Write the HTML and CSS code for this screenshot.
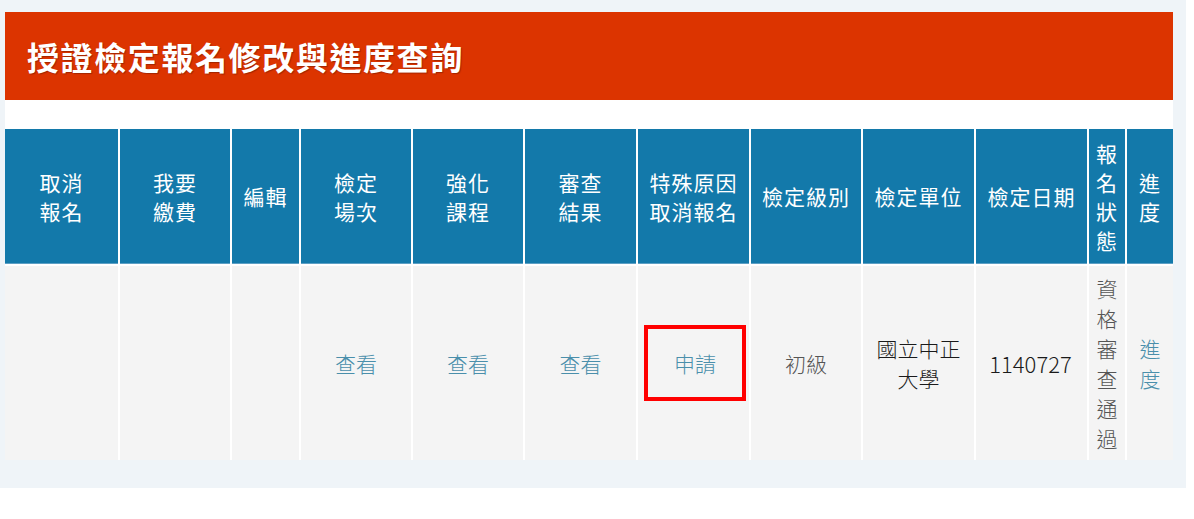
FILE: index.html
```html
<!DOCTYPE html>
<html lang="zh-Hant">
<head>
<meta charset="utf-8">
<title>授證檢定報名修改與進度查詢</title>
<link rel="stylesheet" href="styles.css">
</head>
<body>
<div class="page">
  <div class="panel">
    <div class="title-bar"><h1 class="title">授證檢定報名修改與進度查詢</h1></div>
    <div class="spacer"></div>
    <table class="grid">
      <colgroup>
        <col class="c1"><col class="c2"><col class="c3"><col class="c4"><col class="c5"><col class="c6">
        <col class="c7"><col class="c8"><col class="c9"><col class="c10"><col class="c11"><col class="c12">
      </colgroup>
      <thead>
        <tr>
          <th>取消<br>報名</th>
          <th>我要<br>繳費</th>
          <th>編輯</th>
          <th>檢定<br>場次</th>
          <th>強化<br>課程</th>
          <th>審查<br>結果</th>
          <th>特殊原因<br>取消報名</th>
          <th>檢定級別</th>
          <th>檢定單位</th>
          <th>檢定日期</th>
          <th class="narrow">報名狀態</th>
          <th class="narrow">進度</th>
        </tr>
      </thead>
      <tbody>
        <tr>
          <td></td>
          <td></td>
          <td></td>
          <td><a class="link" href="#">查看</a></td>
          <td><a class="link" href="#">查看</a></td>
          <td><a class="link" href="#">查看</a></td>
          <td><span class="mark"><a class="link" href="#">申請</a></span></td>
          <td class="muted">初級</td>
          <td class="dark unit">國立中正大學</td>
          <td class="dark"><span class="date">1140727</span></td>
          <td class="muted narrow">資格審查通過</td>
          <td class="narrow"><a class="link" href="#">進度</a></td>
        </tr>
      </tbody>
    </table>
  </div>
</div>
</body>
</html>
```

FILE: styles.css
```css
html, body {
  margin: 0;
  padding: 0;
  background: #ffffff;
}

body {
  font-family: "Noto Sans CJK TC", "Noto Sans", "Liberation Sans", sans-serif;
}

.page {
  width: 1186px;
  box-sizing: border-box;
  padding: 12px 13px 28px 5px;
  background: #eff4f8;
}

.panel {
  width: 1168px;
  background: #ffffff;
}

.title-bar {
  height: 88px;
  background: #dc3400;
  display: flex;
  align-items: center;
  padding-left: 22px;
}

.title {
  margin: 0;
  color: #ffffff;
  font-size: 32px;
  font-weight: 700;
  letter-spacing: 1.6px;
  line-height: 1;
  text-shadow: 1px 1px 1px rgba(90, 20, 0, 0.45);
}

.spacer {
  height: 29px;
}

.grid {
  width: 1168px;
  table-layout: fixed;
  border-collapse: separate;
  border-spacing: 0;
}

.c1 { width: 115px; }
.c2 { width: 112px; }
.c3 { width: 69px; }
.c4 { width: 112px; }
.c5 { width: 112px; }
.c6 { width: 113px; }
.c7 { width: 113px; }
.c8 { width: 112px; }
.c9 { width: 113px; }
.c10 { width: 113px; }
.c11 { width: 38px; }
.c12 { width: 46px; }

.grid th,
.grid td {
  box-sizing: border-box;
  padding: 0 6px;
  text-align: center;
  vertical-align: middle;
  border-right: 2px solid #ffffff;
}

.grid th:last-child,
.grid td:last-child {
  border-right: 0;
}

.grid th {
  height: 137px;
  background: #1379aa;
  color: #ffffff;
  font-size: 21px;
  font-weight: 400;
  line-height: 29px;
  letter-spacing: 1px;
  border-bottom: 2px solid #ffffff;
  box-shadow: inset 0 -1px 0 #5d9fc4;
}

.grid td {
  height: 194px;
  background: #f4f4f4;
  font-size: 21px;
  font-weight: 300;
  line-height: 30px;
  color: #555555;
}

.grid th.narrow,
.grid td.narrow {
  padding: 0 4px;
  word-break: break-all;
}

.link {
  color: #4a8fab;
  text-decoration: none;
}

.muted {
  color: #555555;
}

.grid td.dark {
  color: #1a1a1a;
}

.unit {
  line-height: 25px;
  padding: 0 10px;
}

.date {
  display: inline-block;
  background: #f4f4f4;
  margin-left: -8px;
  padding: 2px 0 2px 6px;
  font-size: 22px;
  line-height: 30px;
  color: #1a1a1a;
}

.mark {
  display: inline-block;
  box-sizing: border-box;
  width: 102px;
  height: 76px;
  border: 4px solid #ff0000;
  line-height: 68px;
}
```
